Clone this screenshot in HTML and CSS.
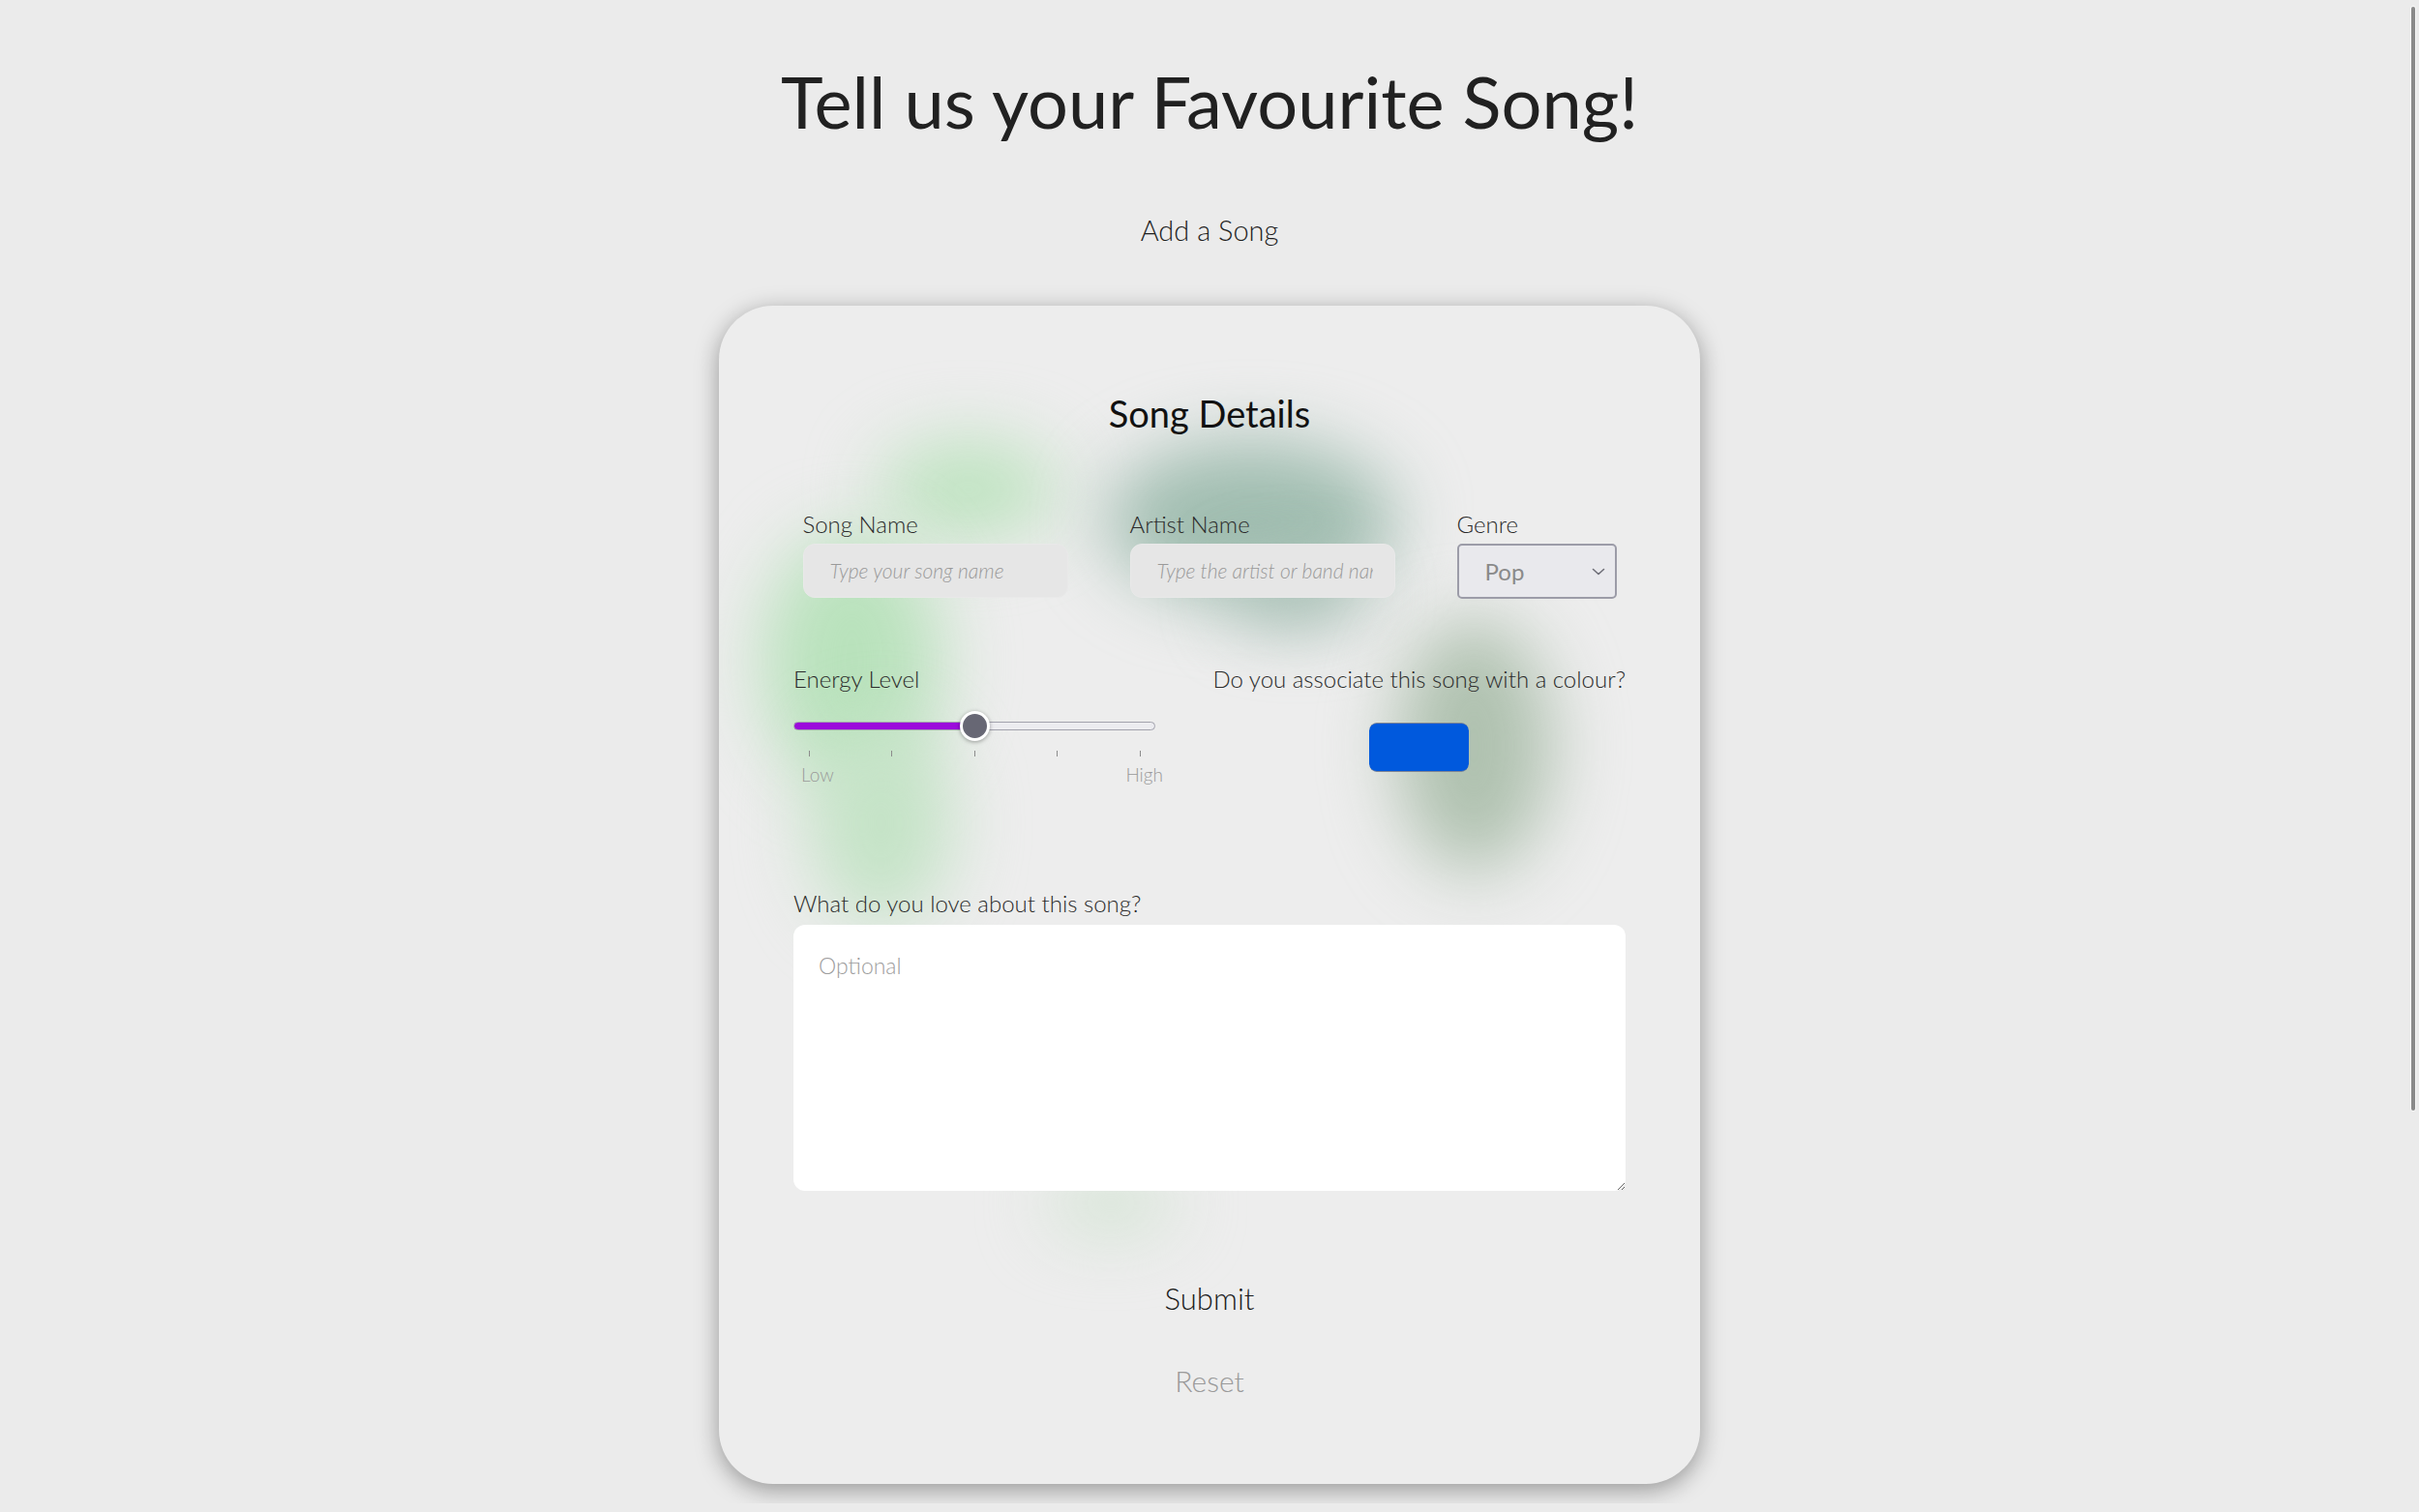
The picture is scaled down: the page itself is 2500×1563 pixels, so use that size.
FILE: index.html
```html
<!DOCTYPE html>
<html lang="en">
<head>
<meta charset="utf-8">
<title>Favourite Song</title>
<link rel="stylesheet" href="styles.css">
</head>
<body>
<main class="page">
  <h1 class="title">Tell us your Favourite Song!</h1>
  <p class="subtitle">Add a Song</p>
  <form class="card">
    <div class="blobs" aria-hidden="true">
      <span class="blob b1"></span>
      <span class="blob b2"></span>
      <span class="blob b3"></span>
      <span class="blob b4"></span>
      <span class="blob b5"></span>
      <span class="blob b6"></span>
      <span class="blob b7"></span>
    </div>
    <h2 class="card-title">Song Details</h2>
    <div class="row-top">
      <label class="field">
        <span class="label">Song Name</span>
        <input class="text-input" type="text" placeholder="Type your song name">
      </label>
      <label class="field">
        <span class="label">Artist Name</span>
        <input class="text-input" type="text" placeholder="Type the artist or band name">
      </label>
      <label class="field">
        <span class="label">Genre</span>
        <span class="select-wrap">
          <select class="select">
            <option>Pop</option>
            <option>Rock</option>
            <option>Jazz</option>
          </select>
          <svg class="chev" width="14" height="8" viewBox="0 0 14 8"><path d="M1.5 1.5 L7 6.5 L12.5 1.5" fill="none" stroke="#6f6f78" stroke-width="1.6" stroke-linecap="round" stroke-linejoin="round"/></svg>
        </span>
      </label>
    </div>
    <div class="row-mid">
      <div class="energy">
        <span class="label">Energy Level</span>
        <input class="range" type="range" min="0" max="100" step="25" value="50">
        <div class="ticks"><i></i><i></i><i></i><i></i><i></i></div>
        <div class="range-labels"><span>Low</span><span>High</span></div>
      </div>
      <div class="colour">
        <span class="label">Do you associate this song with a colour?</span>
        <input class="swatch" type="color" value="#0059dd">
      </div>
    </div>
    <label class="field-wide">
      <span class="label">What do you love about this song?</span>
      <textarea class="textarea" placeholder="Optional"></textarea>
    </label>
    <div class="actions">
      <button class="btn-submit" type="submit">Submit</button>
      <button class="btn-reset" type="reset">Reset</button>
    </div>
  </form>
</main>
<div class="scroll-thumb" aria-hidden="true"></div>
</body>
</html>
```

FILE: styles.css
```css
html, body {
  margin: 0;
  padding: 0;
}
body {
  background: #ebebeb;
  font-family: "Lato", "Open Sans", sans-serif;
  color: #222;
}
.page {
  display: flex;
  flex-direction: column;
  align-items: center;
  padding: 61px 0 20px;
}
.title {
  margin: 0;
  font-size: 74px;
  line-height: 1.2;
  font-weight: 400;
  color: #212121;
}
.subtitle {
  margin: 71px 0 0;
  font-size: 29px;
  line-height: 1.2;
  font-weight: 300;
  color: #1e1e1e;
}
.card {
  position: relative;
  margin-top: 60px;
  width: 1014px;
  box-sizing: border-box;
  padding: 89px 77px 89px;
  background: #ededed;
  border-radius: 56px;
  box-shadow: 0 6px 24px rgba(0, 0, 0, 0.36);
  display: flex;
  flex-direction: column;
}
.blobs {
  position: absolute;
  inset: 0;
  border-radius: 56px;
  overflow: hidden;
  pointer-events: none;
}
.blob {
  position: absolute;
  border-radius: 50%;
  filter: blur(36px);
}
.b1 { left: 165px; top: 140px; width: 185px; height: 100px; background: #bde3bf; }
.b2 { left: 45px; top: 235px; width: 185px; height: 265px; background: #b9e2bc; }
.b3 { left: 95px; top: 430px; width: 145px; height: 210px; background: #c4e3c6; }
.b4 { left: 400px; top: 140px; width: 300px; height: 165px; background: #a0bdb0; }
.b5 { left: 530px; top: 268px; width: 135px; height: 60px; background: #a3bcb1; }
.b6 { left: 700px; top: 325px; width: 160px; height: 260px; background: #afc1af; }
.b7 { left: 340px; top: 900px; width: 130px; height: 55px; background: #d0e3d0; }

.card > *:not(.blobs) {
  position: relative;
}
.card-title {
  margin: 0;
  text-align: center;
  font-size: 38px;
  line-height: 1.2;
  font-weight: 400;
  color: #111;
}
.label {
  display: block;
  font-size: 24px;
  line-height: 1.2;
  font-weight: 300;
  color: #2b2b2b;
  white-space: nowrap;
}
.row-top {
  margin-top: 78px;
  display: flex;
  justify-content: center;
  gap: 64px;
}
.field {
  display: flex;
  flex-direction: column;
  gap: 4.7px;
}
.text-input {
  width: 274px;
  height: 56px;
  box-sizing: border-box;
  padding: 0 22px 0 27px;
  border: 1px solid #e9e9e9;
  border-radius: 12px;
  background: #e6e6e6;
  font-family: "Lato", sans-serif;
  font-size: 21px;
  font-weight: 300;
  color: #333;
  outline: none;
}
.text-input::placeholder {
  font-style: italic;
  color: #9a9a9a;
}
.select-wrap {
  position: relative;
  display: block;
  width: 165px;
  height: 57px;
}
.select {
  -webkit-appearance: none;
  appearance: none;
  width: 100%;
  height: 100%;
  box-sizing: border-box;
  padding: 0 30px 0 27px;
  border: 2px solid #9c9ca8;
  border-radius: 5px;
  background: #e9e9ed;
  font-family: "Lato", sans-serif;
  font-size: 24px;
  font-weight: 400;
  color: #8a8a8a;
}
.chev {
  position: absolute;
  right: 12px;
  top: 25px;
  pointer-events: none;
}
.row-mid {
  margin-top: 69.5px;
  display: flex;
  justify-content: space-between;
  align-items: flex-start;
}
.energy {
  width: 374px;
  display: flex;
  flex-direction: column;
}
.range {
  -webkit-appearance: none;
  appearance: none;
  margin: 18px 0 0;
  width: 374px;
  height: 31px;
  background: transparent;
}
.range::-webkit-slider-runnable-track {
  height: 9px;
  box-sizing: border-box;
  border-radius: 5px;
  border: 1px solid #a2a2ad;
  background: linear-gradient(to right, #9b0bdb 0, #9b0bdb 50%, #ececf0 50%, #ececf0 100%);
}
.range::-webkit-slider-thumb {
  -webkit-appearance: none;
  appearance: none;
  width: 31px;
  height: 31px;
  box-sizing: border-box;
  margin-top: -12px;
  border-radius: 50%;
  background: #676774;
  border: 3px solid #fff;
  box-shadow: 0 1px 4px rgba(0, 0, 0, 0.35);
}
.ticks {
  margin-top: 10.5px;
  height: 6px;
  padding: 0 15.5px;
  display: flex;
  justify-content: space-between;
}
.ticks i {
  width: 1px;
  height: 6px;
  background: #8c8c8c;
}
.range-labels {
  margin: 8px -8px 0 8px;
  display: flex;
  justify-content: space-between;
  font-size: 19px;
  line-height: 1.2;
  font-weight: 300;
  color: #9a9a9a;
}
.colour {
  display: flex;
  flex-direction: column;
  align-items: center;
}
.swatch {
  -webkit-appearance: none;
  appearance: none;
  margin-top: 29.7px;
  width: 103px;
  height: 51px;
  padding: 0;
  border: none;
  border-radius: 8px;
  background: transparent;
  cursor: pointer;
}
.swatch::-webkit-color-swatch-wrapper {
  padding: 0;
}
.swatch::-webkit-color-swatch {
  border: none;
  border-top: 1px solid #7d8494;
  border-bottom: 1px solid #7d8494;
  border-radius: 8px;
}
.field-wide {
  margin-top: 107px;
  display: flex;
  flex-direction: column;
  gap: 6.7px;
}
.textarea {
  width: 860px;
  height: 275px;
  box-sizing: border-box;
  padding: 29px 26px;
  border: none;
  border-radius: 12px;
  background: #fff;
  font-family: "Lato", sans-serif;
  font-size: 23px;
  line-height: 1.2;
  font-weight: 300;
  color: #333;
  outline: none;
}
.textarea::placeholder {
  color: #9d9d9d;
}
.actions {
  margin-top: 93.6px;
  display: flex;
  flex-direction: column;
  align-items: center;
  gap: 47.8px;
}
.btn-submit, .btn-reset {
  margin: 0;
  padding: 0;
  border: none;
  background: none;
  font-family: "Lato", sans-serif;
  line-height: 1.2;
  font-weight: 300;
  cursor: pointer;
}
.btn-submit {
  font-size: 31px;
  color: #1c1c1c;
}
.btn-reset {
  font-size: 30px;
  color: #9a9a9a;
}
.scroll-thumb {
  position: fixed;
  top: 7px;
  right: 4px;
  width: 4px;
  height: 1141px;
  border-radius: 2px;
  background: #8a8a8a;
  box-shadow: 0 0 0 1px rgba(255, 255, 255, 0.55);
  pointer-events: none;
}
```
